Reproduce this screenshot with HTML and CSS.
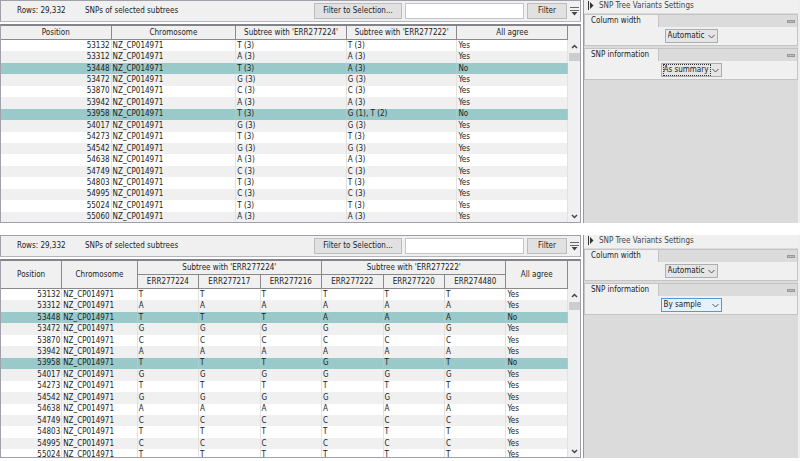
FILE: index.html
```html
<!DOCTYPE html>
<html lang="en">
<head>
    <meta charset="UTF-8">
    <meta name="viewport" content="width=device-width, initial-scale=1.0">
    <title>SNPs of selected subtrees</title>
    <link rel="stylesheet" href="styles.css">
</head>
<body>

    <!-- Summary view -->
    <section class="view">
        <div class="main">
            <div class="toolbar">
                <span class="rows">Rows: 29,332</span>
                <span class="title">SNPs of selected subtrees</span>
                <button type="button" class="btn">Filter to Selection...</button>
                <input type="text" class="filter" aria-label="Filter text">
                <button type="button" class="btn btn-small">Filter</button>
                <button type="button" class="more" aria-label="More filter options">
                    <svg width="9" height="9" viewBox="0 0 9 9"><path d="M0 .5h9M0 3.500h9" stroke="#666"/><path d="M1.500 5h6L4.500 8.500z" fill="#444"/></svg>
                </button>
            </div>
            <div class="table-frame">
                <div class="table-clip">
                    <table class="summary">
                        <colgroup><col class="c-pos"><col class="c-chr"><col><col><col></colgroup>
                        <thead>
                            <tr>
                                <th>Position</th>
                                <th>Chromosome</th>
                                <th>Subtree with 'ERR277224'</th>
                                <th>Subtree with 'ERR277222'</th>
                                <th>All agree</th>
                            </tr>
                        </thead>
                        <tbody id="summary-rows"></tbody>
                    </table>
                </div>
                <div class="scrollbar">
                    <button type="button" aria-label="Scroll up"><svg width="7" height="5" viewBox="0 0 7 5"><path d="M1 4l2.500-2.500L6 4" fill="none" stroke="#444" stroke-width="1.500"/></svg></button>
                    <div class="thumb"></div>
                    <button type="button" aria-label="Scroll down"><svg width="7" height="5" viewBox="0 0 7 5"><path d="M1 1l2.500 2.500L6 1" fill="none" stroke="#444" stroke-width="1.500"/></svg></button>
                </div>
            </div>
        </div>

        <aside class="settings">
            <h2><svg width="6" height="9" viewBox="0 0 6 9"><path d="M.5 0v9" stroke="#333"/><path d="M2 1l3.500 3.500L2 8z" fill="#333"/></svg>SNP Tree Variants Settings</h2>
            <div class="group">
                <div class="group-head"><label for="width1">Column width</label><button type="button" class="fold" aria-label="Collapse"></button></div>
                <div class="group-body">
                    <div class="combo">
                        <select id="width1"><option>Automatic</option></select>
                        <svg width="7" height="5" viewBox="0 0 7 5"><path d="M.5 1l3 3 3-3" fill="none" stroke="#555"/></svg>
                    </div>
                </div>
            </div>
            <div class="group">
                <div class="group-head"><label for="info1">SNP information</label><button type="button" class="fold" aria-label="Collapse"></button></div>
                <div class="group-body">
                    <div class="combo combo-wide">
                        <select id="info1" class="focused"><option>As summary</option><option>By sample</option></select>
                        <svg width="7" height="5" viewBox="0 0 7 5"><path d="M.5 1l3 3 3-3" fill="none" stroke="#555"/></svg>
                    </div>
                </div>
            </div>
        </aside>
    </section>

    <!-- Per sample view -->
    <section class="view">
        <div class="main">
            <div class="toolbar">
                <span class="rows">Rows: 29,332</span>
                <span class="title">SNPs of selected subtrees</span>
                <button type="button" class="btn">Filter to Selection...</button>
                <input type="text" class="filter" aria-label="Filter text">
                <button type="button" class="btn btn-small">Filter</button>
                <button type="button" class="more" aria-label="More filter options">
                    <svg width="9" height="9" viewBox="0 0 9 9"><path d="M0 .5h9M0 3.500h9" stroke="#666"/><path d="M1.500 5h6L4.500 8.500z" fill="#444"/></svg>
                </button>
            </div>
            <div class="table-frame">
                <div class="table-clip">
                    <table class="samples">
                        <colgroup><col class="c-pos"><col class="c-chr"><col><col><col><col><col><col><col></colgroup>
                        <thead>
                            <tr>
                                <th rowspan="2">Position</th>
                                <th rowspan="2">Chromosome</th>
                                <th colspan="3">Subtree with 'ERR277224'</th>
                                <th colspan="3">Subtree with 'ERR277222'</th>
                                <th rowspan="2">All agree</th>
                            </tr>
                            <tr>
                                <th>ERR277224</th>
                                <th>ERR277217</th>
                                <th>ERR277216</th>
                                <th>ERR277222</th>
                                <th>ERR277220</th>
                                <th>ERR274480</th>
                            </tr>
                        </thead>
                        <tbody id="sample-rows"></tbody>
                    </table>
                </div>
                <div class="scrollbar scrollbar-low">
                    <button type="button" aria-label="Scroll up"><svg width="7" height="5" viewBox="0 0 7 5"><path d="M1 4l2.500-2.500L6 4" fill="none" stroke="#444" stroke-width="1.500"/></svg></button>
                    <div class="thumb"></div>
                    <button type="button" aria-label="Scroll down"><svg width="7" height="5" viewBox="0 0 7 5"><path d="M1 1l2.500 2.500L6 1" fill="none" stroke="#444" stroke-width="1.500"/></svg></button>
                </div>
            </div>
        </div>

        <aside class="settings">
            <h2><svg width="6" height="9" viewBox="0 0 6 9"><path d="M.5 0v9" stroke="#333"/><path d="M2 1l3.500 3.500L2 8z" fill="#333"/></svg>SNP Tree Variants Settings</h2>
            <div class="group">
                <div class="group-head"><label for="width2">Column width</label><button type="button" class="fold" aria-label="Collapse"></button></div>
                <div class="group-body">
                    <div class="combo">
                        <select id="width2"><option>Automatic</option></select>
                        <svg width="7" height="5" viewBox="0 0 7 5"><path d="M.5 1l3 3 3-3" fill="none" stroke="#555"/></svg>
                    </div>
                </div>
            </div>
            <div class="group">
                <div class="group-head"><label for="info2">SNP information</label><button type="button" class="fold" aria-label="Collapse"></button></div>
                <div class="group-body">
                    <div class="combo combo-wide combo-active">
                        <select id="info2"><option>By sample</option><option>As summary</option></select>
                        <svg width="7" height="5" viewBox="0 0 7 5"><path d="M.5 1l3 3 3-3" fill="none" stroke="#555"/></svg>
                    </div>
                </div>
            </div>
        </aside>
    </section>

    <script src="script.js"></script>
</body>
</html>
```

FILE: styles.css
```css
* {
    box-sizing: border-box;
}

body {
    margin: 0;
    background: #fff;
    color: #222;
    font-family: Tahoma, "DejaVu Sans Condensed", sans-serif;
    font-size: 8px;
    line-height: 10px;
}

button, input, select {
    font: inherit;
    color: inherit;
    margin: 0;
    padding: 0;
    border-radius: 0;
}

svg {
    display: block;
    flex: none;
}

.view {
    display: grid;
    grid-template-columns: 581fr 217fr;
    column-gap: 2px;
    height: 223px;
    margin-bottom: 12px;
}

/* Toolbar */
.toolbar {
    display: flex;
    align-items: center;
    height: 22px;
    padding: 0 1px 0 16px;
    background: #f0f0f0;
    border: 1px solid #a0a0aa;
    border-bottom-color: #b4b4bc;
    margin-bottom: 2px;
}

.rows {
    width: 68px;
}

.title {
    flex: 1;
}

.btn {
    width: 88px;
    height: 16px;
    background: #e1e1e1;
    border: 1px solid #bcbcbc;
}

.btn-small {
    width: 40px;
}

.filter {
    width: 119px;
    height: 16px;
    margin: 0 3px;
    padding: 0 3px;
    background: #fff;
    border: 1px solid #c4c4c8;
}

.more {
    margin-left: 3px;
    border: 0;
    background: none;
}

/* Tables */
.table-frame {
    display: flex;
    height: 199px;
    border: 1px solid #a0a0aa;
    border-top: 2px solid #83838a;
    background: #f0f0f0;
}

.table-clip {
    flex: 1;
    overflow: hidden;
}

table {
    width: 100%;
    table-layout: fixed;
    border-collapse: separate;
    border-spacing: 0;
    background: #fff;
}

.summary {
    height: 197px;
}

.samples {
    height: 200px;
}

.summary .c-pos {
    width: 19.5%;
}

.summary .c-chr {
    width: 22%;
}

.samples .c-pos {
    width: 10.8%;
}

.samples .c-chr {
    width: 13.3%;
}

th {
    height: 14px;
    padding: 0;
    background: #f0f0f0;
    border-right: 1px solid #8a8a8a;
    border-bottom: 1px solid #8a8a8a;
    font-weight: normal;
    line-height: 10px;
    white-space: nowrap;
}

td {
    padding: 0 1px;
    border-right: 1px solid #e2e2e2;
    line-height: 10px;
    white-space: nowrap;
}

td:first-child {
    text-align: right;
}

tbody tr:nth-child(even) {
    background: #f0f0f0;
}

tbody tr.selected {
    background: #99c9c8;
}

tr.selected td {
    border-right-color: #a8cfce;
}

.scrollbar {
    display: flex;
    flex-direction: column;
    width: 12px;
    padding-top: 14px;
}

.scrollbar-low {
    padding-top: 28px;
}

.scrollbar button {
    display: flex;
    align-items: center;
    justify-content: center;
    height: 12px;
    border: 0;
    background: none;
}

.thumb {
    height: 8px;
    margin: 1px 0 auto 1px;
    background: #cdcdcd;
}

/* Settings panel */
.settings {
    background: #dbdbdb;
    border-left: 1px solid #999;
    border-right: 2px solid #eee;
}

.settings h2 {
    display: flex;
    align-items: center;
    gap: 5px;
    height: 13px;
    margin: 0 0 1px;
    padding: 0 0 2px 4px;
    background: #f0f0f0;
    color: #444;
    font-size: 8px;
    font-weight: normal;
}

.group {
    margin-bottom: 2px;
    border: 1px solid #c4c4c4;
    background: #f0f0f0;
}

.group-head {
    display: flex;
    align-items: center;
    justify-content: space-between;
    height: 12px;
    padding-right: 2px;
    background: #dbdbdb;
}

.group-head label {
    width: 74px;
    padding-left: 6px;
    background: #f0f0f0;
    border-right: 1px solid #c4c4c4;
    line-height: 12px;
}

.fold {
    width: 8px;
    height: 3px;
    border: 1px solid #999;
    background: #bbb;
}

.group-body {
    display: flex;
    justify-content: center;
    padding: 2px 0;
}

.combo {
    display: flex;
    align-items: center;
    width: 53px;
    height: 14px;
    padding: 0 2px 0 1px;
    background: #e5e5e5;
    border: 1px solid #adadad;
}

.combo-wide {
    width: 61px;
}

.combo select {
    flex: 1;
    min-width: 0;
    height: 12px;
    margin-right: 1px;
    padding: 0 0 0 1px;
    appearance: none;
    border: 0;
    background: none;
    outline: none;
    white-space: nowrap;
}

.combo .focused {
    outline: 1px dotted #333;
    outline-offset: -1px;
}

.combo-active {
    background: #e5f1fb;
    border-color: #4a9be0;
}
```

FILE: script.js
```js
// position, calls in the ERR277224 subtree, calls in the ERR277222 subtree
const variants = [
    [53132, 'TTT', 'TTT'],
    [53312, 'AAA', 'AAA'],
    [53448, 'TTT', 'AAA'],
    [53472, 'GGG', 'GGG'],
    [53870, 'CCC', 'CCC'],
    [53942, 'AAA', 'AAA'],
    [53958, 'TTT', 'GTT'],
    [54017, 'GGG', 'GGG'],
    [54273, 'TTT', 'TTT'],
    [54542, 'GGG', 'GGG'],
    [54638, 'AAA', 'AAA'],
    [54749, 'CCC', 'CCC'],
    [54803, 'TTT', 'TTT'],
    [54995, 'CCC', 'CCC'],
    [55024, 'TTT', 'TTT'],
    [55060, 'AAA', 'AAA']
];

function summarize(calls) {
    const counts = {};
    for (const c of calls) {
        counts[c] = (counts[c] || 0) + 1;
    }
    return Object.keys(counts).map(c => `${c} (${counts[c]})`).join(', ');
}

function fillRows(id, list, toCells) {
    document.getElementById(id).innerHTML = list.map(([pos, a, b]) => {
        const agree = a === b;
        const cells = [pos, 'NZ_CP014971', ...toCells(a, b), agree ? 'Yes' : 'No'];
        return `<tr${agree ? '' : ' class="selected"'}>${cells.map(c => `<td>${c}</td>`).join('')}</tr>`;
    }).join('');
}

fillRows('summary-rows', variants, (a, b) => [summarize(a), summarize(b)]);
fillRows('sample-rows', variants.slice(0, 15), (a, b) => [...a, ...b]);
```
